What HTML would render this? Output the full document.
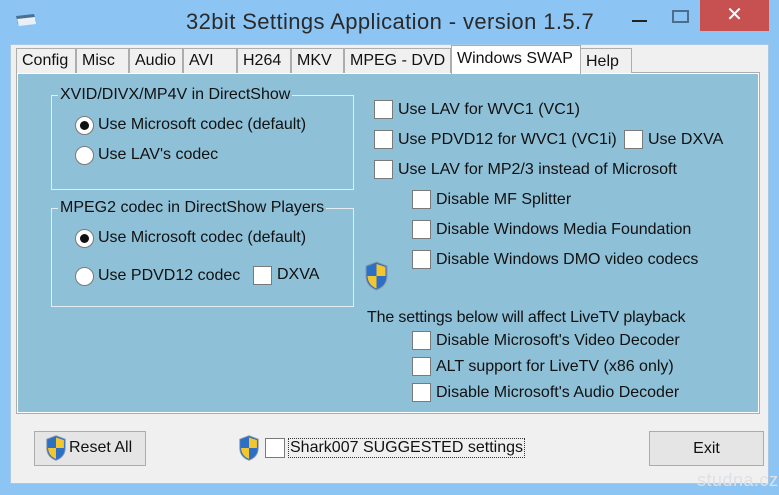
<!DOCTYPE html>
<html><head><meta charset="utf-8"><style>
*{margin:0;padding:0;box-sizing:border-box}
body{width:779px;height:495px;background:#8cc5f4;position:relative;overflow:hidden;font-family:"Liberation Sans",Arial,sans-serif;font-size:16px;color:#111}
.a{position:absolute;white-space:nowrap}
.cb{position:absolute;width:19px;height:19px;background:#fff;border:1px solid #7a7a7a}
.rd{position:absolute;width:19px;height:19px;border-radius:50%;background:#fff;border:1px solid #7a7a7a}
.rd.on::after{content:"";position:absolute;left:4px;top:4px;width:9px;height:9px;border-radius:50%;background:#111}
.tab{position:absolute;top:48px;height:25px;background:#f0f0f0;border:1px solid #adadad;border-bottom:none;padding:3px 0 0 5px;font-size:16px}
.grp{position:absolute;border:1px solid #e4eef2}
.btn{position:absolute;background:#e5e5e5;border:1px solid #acacac;text-align:center;font-size:16px}
</style></head><body>
<svg class="a" style="left:14px;top:13px" width="24" height="14"><path d="M2 3 L20 1 L22 8 L4 11 Z" fill="#4a6f90"/><path d="M3 6 L21 4 L22 11 L5 13 Z" fill="#e8f0f8"/></svg>
<div class="a" style="left:186px;top:9px;font-size:22px;letter-spacing:0.4px;color:#2a2a2a">32bit Settings Application - version 1.5.7</div>
<div class="a" style="left:632px;top:20px;width:15px;height:2px;background:#222"></div>
<div class="a" style="left:672px;top:10px;width:17px;height:13px;border:2px solid #4d6d8c"></div>
<div class="a" style="left:700px;top:0;width:69px;height:31px;background:#c75050;color:#fff;font-size:20px;text-align:center;line-height:30px">✕</div>
<div class="a" style="left:10px;top:44px;width:759px;height:440px;background:#f0f0f0;border:1px solid #a8c8e6"></div>
<div class="a" style="left:16px;top:72px;width:744px;height:342px;background:#fff;border:1px solid #adadad"></div>
<div class="a" style="left:18px;top:74px;width:740px;height:338px;background:#8ec0d7"></div>
<div class="tab" style="left:16px;width:60px">Config</div>
<div class="tab" style="left:76px;width:53px">Misc</div>
<div class="tab" style="left:129px;width:54px">Audio</div>
<div class="tab" style="left:183px;width:54px">AVI</div>
<div class="tab" style="left:237px;width:54px">H264</div>
<div class="tab" style="left:291px;width:53px">MKV</div>
<div class="tab" style="left:344px;width:107px">MPEG - DVD</div>
<div class="tab" style="left:451px;top:45px;height:29px;width:130px;background:#fff;padding-top:4px">Windows SWAP</div>
<div class="tab" style="left:580px;width:52px;padding-top:4px">Help</div>
<div class="grp" style="left:51px;top:95px;width:303px;height:95px"></div>
<div class="a" style="left:58px;top:86px;background:#8ec0d7;padding:0 2px">XVID/DIVX/MP4V in DirectShow</div>
<div class="rd on" style="left:75px;top:116px"></div><div class="a" style="left:98px;top:116px">Use Microsoft codec (default)</div>
<div class="rd" style="left:75px;top:146px"></div><div class="a" style="left:98px;top:146px">Use LAV's codec</div>
<div class="grp" style="left:51px;top:208px;width:303px;height:99px"></div>
<div class="a" style="left:58px;top:199px;background:#8ec0d7;padding:0 2px">MPEG2 codec in DirectShow Players</div>
<div class="rd on" style="left:75px;top:229px"></div><div class="a" style="left:98px;top:229px">Use Microsoft codec (default)</div>
<div class="rd" style="left:75px;top:267px"></div><div class="a" style="left:98px;top:267px">Use PDVD12 codec</div>
<div class="cb" style="left:253px;top:266px"></div><div class="a" style="left:277px;top:266px">DXVA</div>
<svg class="a" style="left:364px;top:261px" width="25" height="30" viewBox="0 0 25 30"><path d="M12.5 1 L23 5 L23 15 Q23 25 12.5 29 Q2 25 2 15 L2 5 Z" fill="#2d6fc4" stroke="#8a9aa8"/><path d="M12.5 3 L12.5 15 L21.5 15 L21.5 6 Z" fill="#f2c62c"/><path d="M12.5 15 L3.5 15 Q4 24 12.5 27.5 Z" fill="#f2c62c"/></svg>
<div class="cb" style="left:374px;top:100px"></div><div class="a" style="left:398px;top:101px">Use LAV for WVC1 (VC1)</div>
<div class="cb" style="left:374px;top:130px"></div><div class="a" style="left:398px;top:131px">Use PDVD12 for WVC1 (VC1i)</div>
<div class="cb" style="left:624px;top:130px"></div><div class="a" style="left:648px;top:131px">Use DXVA</div>
<div class="cb" style="left:374px;top:160px"></div><div class="a" style="left:398px;top:161px">Use LAV for MP2/3 instead of Microsoft</div>
<div class="cb" style="left:412px;top:190px"></div><div class="a" style="left:436px;top:191px">Disable MF Splitter</div>
<div class="cb" style="left:412px;top:220px"></div><div class="a" style="left:436px;top:221px">Disable Windows Media Foundation</div>
<div class="cb" style="left:412px;top:250px"></div><div class="a" style="left:436px;top:251px">Disable Windows DMO video codecs</div>
<div class="a" style="left:367px;top:309px;letter-spacing:-0.15px">The settings below will affect LiveTV playback</div>
<div class="cb" style="left:412px;top:331px"></div><div class="a" style="left:436px;top:332px">Disable Microsoft's Video Decoder</div>
<div class="cb" style="left:412px;top:357px"></div><div class="a" style="left:436px;top:358px">ALT support for LiveTV (x86 only)</div>
<div class="cb" style="left:412px;top:383px"></div><div class="a" style="left:436px;top:384px">Disable Microsoft's Audio Decoder</div>
<div class="btn" style="left:34px;top:431px;width:112px;height:35px"></div>
<svg class="a" style="left:45px;top:434px" width="22" height="28" viewBox="0 0 25 30"><path d="M12.5 1 L23 5 L23 15 Q23 25 12.5 29 Q2 25 2 15 L2 5 Z" fill="#2d6fc4" stroke="#8a9aa8"/><path d="M12.5 3 L12.5 15 L21.5 15 L21.5 6 Z" fill="#f2c62c"/><path d="M12.5 15 L3.5 15 Q4 24 12.5 27.5 Z" fill="#f2c62c"/></svg>
<div class="a" style="left:69px;top:439px">Reset All</div>
<svg class="a" style="left:238px;top:434px" width="22" height="28" viewBox="0 0 25 30"><path d="M12.5 1 L23 5 L23 15 Q23 25 12.5 29 Q2 25 2 15 L2 5 Z" fill="#2d6fc4" stroke="#8a9aa8"/><path d="M12.5 3 L12.5 15 L21.5 15 L21.5 6 Z" fill="#f2c62c"/><path d="M12.5 15 L3.5 15 Q4 24 12.5 27.5 Z" fill="#f2c62c"/></svg>
<div class="cb" style="left:265px;top:438px;width:20px;height:20px"></div>
<div class="a" style="left:288px;top:438px;border:1px dotted #333;padding:0 1px;height:20px;line-height:18px">Shark007 SUGGESTED settings</div>
<div class="btn" style="left:649px;top:431px;width:115px;height:35px;line-height:33px">Exit</div>
<div class="a" style="left:697px;top:470px;font-size:18px;color:#dde1e5;letter-spacing:0.5px">studna.cz</div>
</body></html>
